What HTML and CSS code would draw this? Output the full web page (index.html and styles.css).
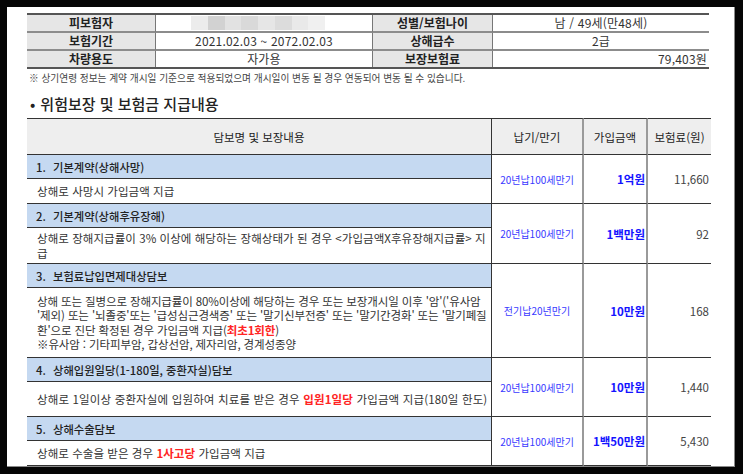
FILE: index.html
```html
<!DOCTYPE html>
<html lang="ko">
<head>
<meta charset="utf-8">
<link rel="stylesheet" href="styles.css">
</head>
<body>
<div class="panel">
  <div class="info">
    <div class="lbl">피보험자</div>
    <div class="val"><div class="mosaic"><i class="m1"></i><i class="m2"></i><i class="m3"></i><i class="m4"></i><i class="m5"></i><i class="m6"></i><i class="m7"></i><i class="m8"></i></div></div>
    <div class="lbl">성별/보험나이</div>
    <div class="val">남 / 49세(만48세)</div>
    <div class="lbl">보험기간</div>
    <div class="val">2021.02.03 ~ 2072.02.03</div>
    <div class="lbl">상해급수</div>
    <div class="val">2급</div>
    <div class="lbl last">차량용도</div>
    <div class="val last">자가용</div>
    <div class="lbl last">보장보험료</div>
    <div class="val last right">79,403원</div>
  </div>
  <p class="note">※ 상기연령 정보는 계약 개시일 기준으로 적용되었으며 개시일이 변동 될 경우 연동되어 변동 될 수 있습니다.</p>
  <h2 class="title"><span class="dot">•</span>위험보장 및 보험금 지급내용</h2>
  <div class="cov">
    <div class="hd c1">담보명 및 보장내용</div>
    <div class="hd c2">납기/만기</div>
    <div class="hd c3">가입금액</div>
    <div class="hd c4">보험료(원)</div>

    <div class="name"><span class="tx"><span class="num">1.</span>기본계약(상해사망)</span></div>
    <div class="term">20년납100세만기</div>
    <div class="amt">1억원</div>
    <div class="prem">11,660</div>
    <div class="desc"><span class="tx">상해로 사망시 가입금액 지급</span></div>

    <div class="name"><span class="tx"><span class="num">2.</span>기본계약(상해후유장해)</span></div>
    <div class="term">20년납100세만기</div>
    <div class="amt">1백만원</div>
    <div class="prem">92</div>
    <div class="desc"><span class="tx">상해로 장해지급률이 3% 이상에 해당하는 장해상태가 된 경우 &lt;가입금액X후유장해지급률&gt; 지<br>급</span></div>

    <div class="name"><span class="tx"><span class="num">3.</span>보험료납입면제대상담보</span></div>
    <div class="term">전기납20년만기</div>
    <div class="amt">10만원</div>
    <div class="prem">168</div>
    <div class="desc tight"><span class="tx">상해 또는 질병으로 장해지급률이 80%이상에 해당하는 경우 또는 보장개시일 이후 '암'('유사암<br>'제외) 또는 '뇌졸중'또는 '급성심근경색증' 또는 '말기신부전증' 또는 '말기간경화' 또는 '말기폐질<br>환'으로 진단 확정된 경우 가입금액 지급(<b class="red">최초1회한</b>)<br>※유사암 : 기타피부암, 갑상선암, 제자리암, 경계성종양</span></div>

    <div class="name"><span class="tx"><span class="num">4.</span>상해입원일당(1-180일, 중환자실)담보</span></div>
    <div class="term">20년납100세만기</div>
    <div class="amt">10만원</div>
    <div class="prem">1,440</div>
    <div class="desc wide"><span class="tx">상해로 1일이상 중환자실에 입원하여 치료를 받은 경우 <b class="red">입원1일당</b> 가입금액 지급(180일 한도)</span></div>

    <div class="name"><span class="tx"><span class="num">5.</span>상해수술담보</span></div>
    <div class="term">20년납100세만기</div>
    <div class="amt">1백50만원</div>
    <div class="prem">5,430</div>
    <div class="desc"><span class="tx">상해로 수술을 받은 경우 <b class="red">1사고당</b> 가입금액 지급</span></div>
  </div>
</div>
</body>
</html>
```

FILE: styles.css
```css
* { box-sizing: border-box; }
html, body { margin: 0; padding: 0; }
body {
  background: #050505;
  width: 743px;
  height: 474px;
  padding: 7px 0 0 7px;
  font-family: "Noto Sans CJK KR", "Noto Sans", sans-serif;
  color: #333;
}
.panel {
  width: 728px;
  height: 460px;
  background: #fff;
  border-right: 1px solid #8a8a8a;
  border-bottom: 1px solid #8a8a8a;
  padding: 6px 0 0 20px;
  overflow: hidden;
}

/* info grid */
.info {
  display: grid;
  grid-template-columns: 128px 217px 120px 217px;
  grid-template-rows: 18px 18px 16px;
  width: 682px;
  border-top: 2px solid #555;
  border-bottom: 2px solid #555;
  font-size: 12px;
}
.info > div {
  display: flex;
  align-items: center;
  justify-content: center;
  border-bottom: 2px solid #8c8c8c;
  border-left: 1px solid #777;
  white-space: nowrap;
  line-height: 16px;
}
.info > div.last { border-bottom: none; }
.info > div:nth-child(4n+1) { border-left: none; }
.lbl {
  background: #e6e6e6;
  font-weight: bold;
  color: #222;
}
.val { color: #333; letter-spacing: 0.2px; }
.val.right { justify-content: flex-end; padding-right: 2px; }
.mosaic {
  display: flex;
  width: 134px;
  height: 14px;
  margin-left: -12px;
}
.mosaic i { flex: 1; }
.m1 { background: #ececec; }
.m2 { background: #d2d2d2; }
.m3 { background: #e2e2e2; }
.m4 { background: #d9d9d9; }
.m5 { background: #e6e6e6; }
.m6 { background: #dcdcdc; }
.m7 { background: #e9e9e9; }
.m8 { background: #f0f0f0; }

.note {
  margin: 3px 0 0 2px;
  height: 13px;
  font-size: 9.7px;
  line-height: 13px;
  color: #444;
  white-space: nowrap;
}
.title {
  margin: 9px 0 0 3px;
  font-size: 15px;
  line-height: 20px;
  font-weight: 500;
  color: #222;
  height: 24px;
}
.dot { margin-right: 5px; }

/* coverage grid */
.cov {
  display: grid;
  grid-template-columns: 465px 92px 64px 63px;
  grid-template-rows: 37px 24px 25px 24px 36px 24px 70px 24px 35px 24px 25px;
  width: 684px;
  font-size: 11.5px;
}
.cov > div {
  border-bottom: 1px solid #333;
  display: flex;
  align-items: center;
  white-space: nowrap;
}
.hd {
  background: #eeeeee;
  border-top: 1px solid #333;
  justify-content: center;
  color: #222;
}
.c1, .name, .desc { border-right: 1px solid #333; grid-column: 1; }
.c2, .term { border-right: 2px solid #9a9a9a; }
.c3, .amt { border-right: 2px solid #9a9a9a; }
.term, .amt, .prem { grid-row: span 2; }
.name {
  background: #c5d9f1;
  padding-left: 9px;
  color: #222;
  font-weight: 500;
  font-size: 11.3px;
}
.num { display: inline-block; width: 17px; }
.desc {
  padding-left: 10px;
  line-height: 14.5px;
  color: #333;
  letter-spacing: 0.05px;
  overflow: hidden;
}
.desc.tight { letter-spacing: -0.12px; }
.desc.wide { letter-spacing: 0.15px; }
.red { color: #ff2424; font-weight: bold; }
.term {
  justify-content: center;
  color: #3a3aff;
  font-size: 10px;
}
.amt {
  justify-content: flex-end;
  color: #1414ff;
  font-weight: bold;
  padding-right: 1px;
}
.prem {
  justify-content: flex-end;
  color: #444;
  padding-right: 2px;
  font-size: 11.5px;
}
```
